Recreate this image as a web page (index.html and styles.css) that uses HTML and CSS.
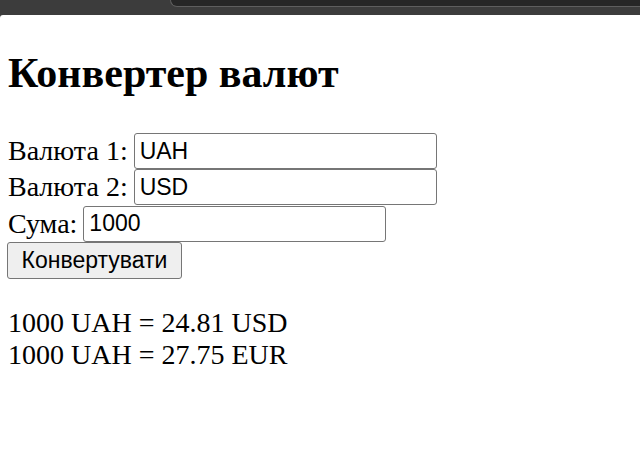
FILE: index.html
```html
<!DOCTYPE html>
<html lang="uk">
<head>
<meta charset="utf-8">
<title>Конвертер валют</title>
<link rel="stylesheet" href="styles.css">
</head>
<body>
<div class="chrome">
  <div class="chrome-tab"></div>
</div>
<main class="page">
  <h1 class="title">Конвертер валют</h1>
  <form class="form">
    <div class="row"><label for="c1">Валюта 1:</label> <input id="c1" class="field" type="text" value="UAH"></div>
    <div class="row"><label for="c2">Валюта 2:</label> <input id="c2" class="field" type="text" value="USD"></div>
    <div class="row"><label for="amt">Сума:</label> <input id="amt" class="field" type="text" value="1000"></div>
    <div class="row"><button type="button" class="btn">Конвертувати</button></div>
  </form>
  <div class="results">
    <div class="result">1000 UAH = 24.81 USD</div>
    <div class="result">1000 UAH = 27.75 EUR</div>
  </div>
</main>
</body>
</html>
```
FILE: styles.css
```css
html, body {
  margin: 0;
  padding: 0;
  background: #3c3c3c;
}
body {
  width: 640px;
  height: 460px;
  overflow: hidden;
  display: flex;
  flex-direction: column;
}
.chrome {
  height: 15px;
  flex: none;
  background: #3c3c3c;
  display: flex;
  justify-content: flex-end;
}
.chrome-tab {
  width: 469px;
  height: 6px;
  background: #262626;
  border-left: 1px solid #5e5e5e;
  border-bottom: 1px solid #5e5e5e;
  border-bottom-left-radius: 11px;
}
.page {
  flex: 1;
  background: #ffffff;
  border-top-left-radius: 3px;
  padding: 8px;
  font-family: "Liberation Serif", "Times New Roman", serif;
  font-size: 28px;
  color: #000;
}
.title {
  font-size: 42px;
  font-weight: bold;
  line-height: 48px;
  margin: 26px 0 36px 0;
}
.form {
  margin: 0;
}
.row {
  height: 36.3px;
  display: flex;
  align-items: center;
  white-space: pre;
}
.row label {
  margin-right: 6px;
}
.field {
  box-sizing: border-box;
  width: 303px;
  height: 36px;
  padding: 0 5px;
  border: 1px solid #767676;
  border-radius: 3px;
  font-family: "Liberation Sans", Arial, sans-serif;
  font-size: 23px;
  color: #000;
  background: #fff;
}
.btn {
  box-sizing: border-box;
  height: 37px;
  width: 175px;
  margin-left: -1px;
  padding: 0 12px;
  border: 1px solid #767676;
  border-radius: 3px;
  background: #efefef;
  font-family: "Liberation Sans", Arial, sans-serif;
  font-size: 23px;
  color: #000;
}
.results {
  margin-top: 29px;
  line-height: 32px;
}
```
